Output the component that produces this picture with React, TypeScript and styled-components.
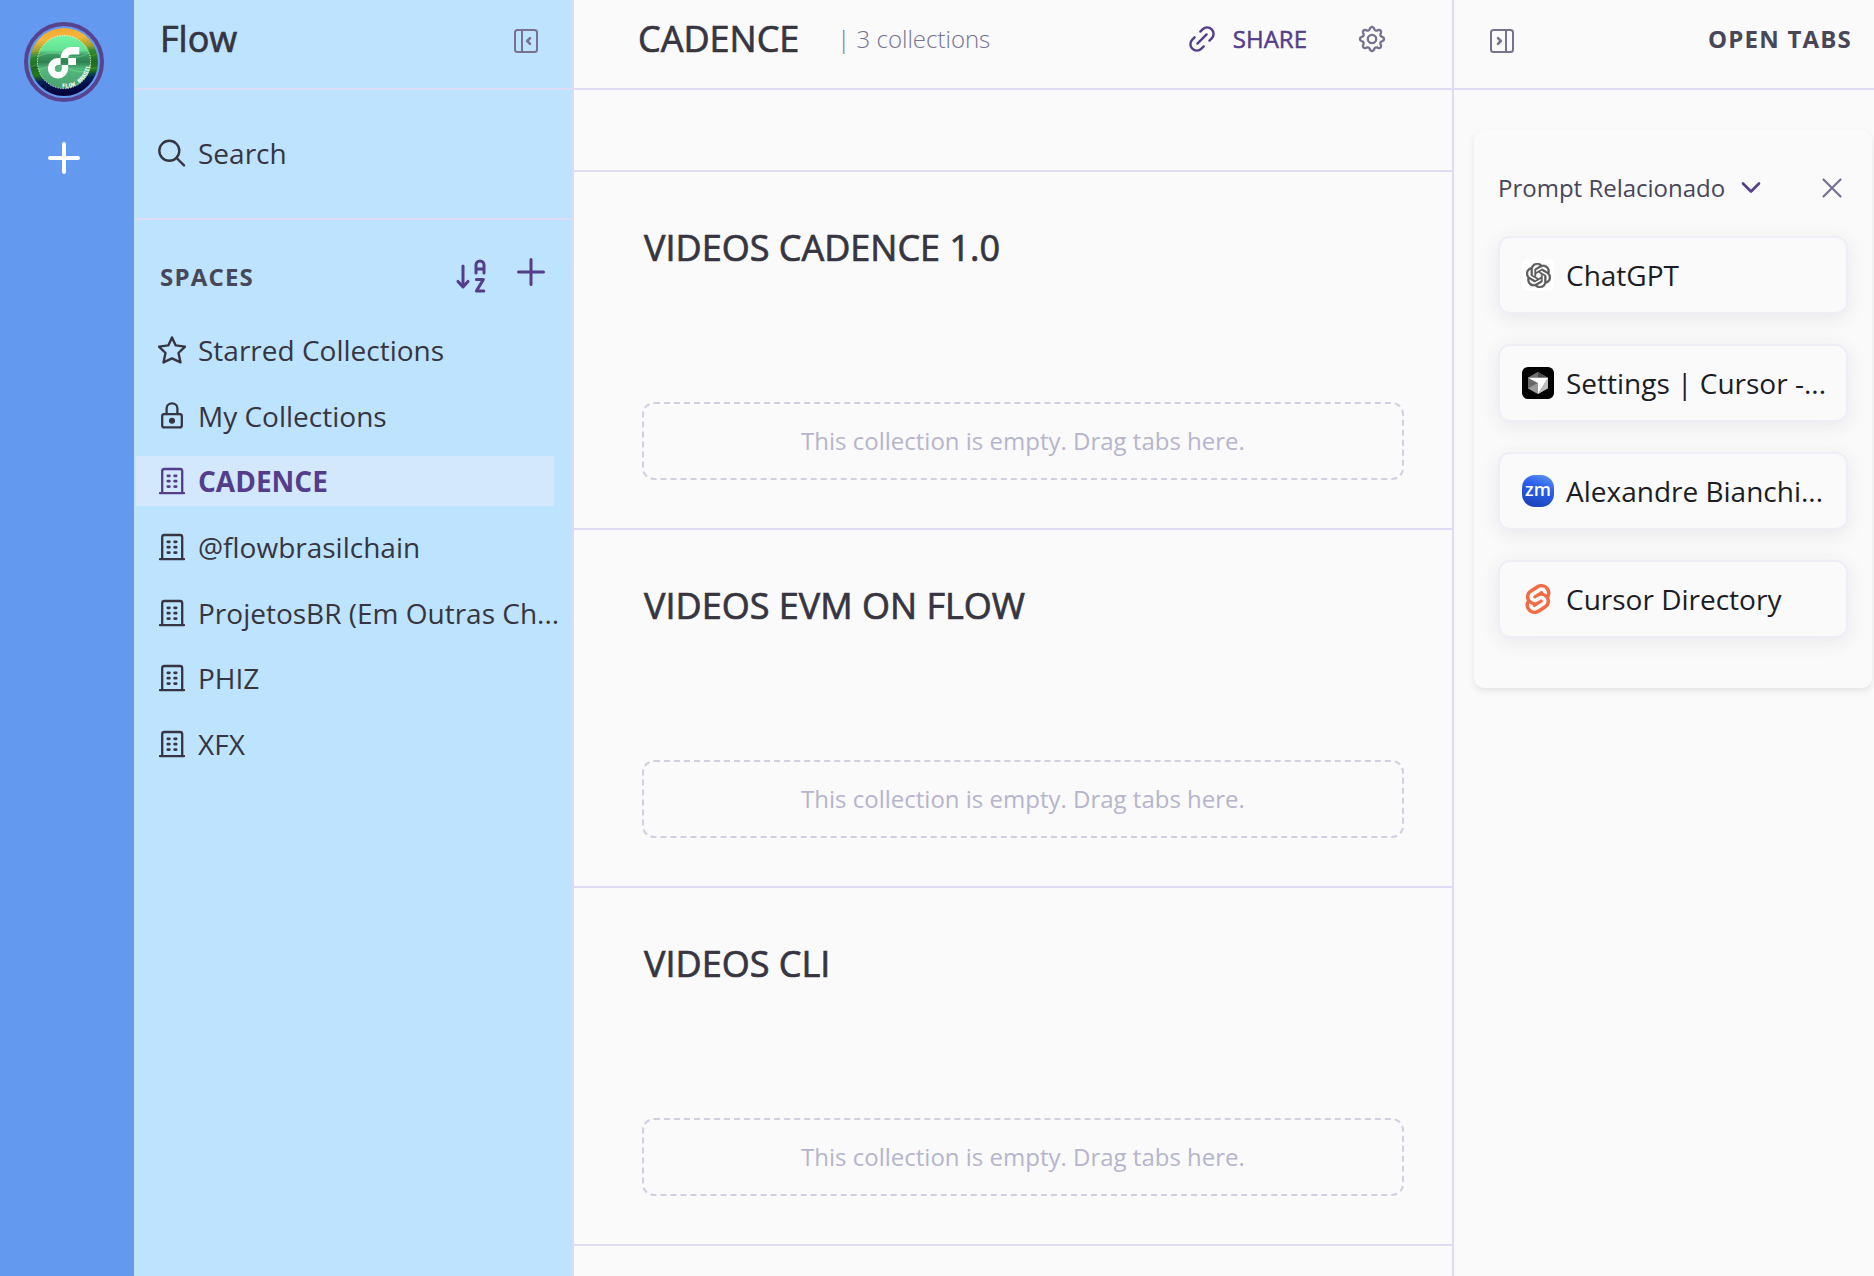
import React from "react";
import styled, { createGlobalStyle } from "styled-components";
import { SiOpenai, SiSvelte } from "react-icons/si";

const color = {
  rail: "#6499f0",
  sidebar: "#bde3fe",
  selected: "#d3e7fd",
  surface: "#fafafa",
  line: "#dddcf4",
  ink: "#363541",
  heading: "#484659",
  muted: "#757390",
  faint: "#b6b5cd",
  dash: "#d2d0e0",
  purple: "#543d8b",
  tabInk: "#1c1c24",
};

const GlobalStyle = createGlobalStyle`
  *, *::before, *::after { box-sizing: border-box; }
  html, body, #root { height: 100%; }
  body {
    margin: 0;
    font-family: "Open Sans", "Noto Sans", sans-serif;
    color: ${color.ink};
    background: ${color.surface};
  }
  h1, h2, h3, p, ul { margin: 0; padding: 0; font-weight: inherit; }
  ul { list-style: none; }
  button, input { font: inherit; color: inherit; border: 0; background: none; padding: 0; }
  button { cursor: pointer; }
  svg { display: block; flex: none; }
`;

const Shell = styled.div`
  display: grid;
  grid-template-columns: 134px 440px minmax(0, 1fr) 422px;
  height: 100vh;
  overflow: hidden;
`;

const Rail = styled.nav`
  display: flex;
  flex-direction: column;
  align-items: center;
  gap: 40px;
  padding: 22px 6px 0 0;
  background: ${color.rail};
`;

const IconButton = styled.button<{ $tone?: string }>`
  display: flex;
  align-items: center;
  justify-content: center;
  color: ${(p) => p.$tone ?? color.muted};
`;

const Sidebar = styled.aside`
  padding-left: 2px;
  background: ${color.sidebar};
  border-right: 2px solid ${color.line};
`;

const Bar = styled.header<{ $pad: string }>`
  display: flex;
  align-items: center;
  justify-content: space-between;
  height: 90px;
  padding: ${(p) => p.$pad};
  border-bottom: 2px solid ${color.line};
`;

const Title = styled.h1`
  font-size: 36px;
  line-height: 48px;
  font-weight: 500;
  -webkit-text-stroke: 0.02em currentColor;
`;

const SearchBox = styled.label`
  display: flex;
  align-items: center;
  gap: 12px;
  height: 130px;
  padding: 0 0 2px 22px;
  border-bottom: 2px solid ${color.line};
`;

const SearchInput = styled.input`
  flex: 1;
  min-width: 0;
  font-size: 28px;
  line-height: 40px;
  outline: none;
  &::placeholder { color: ${color.ink}; opacity: 1; }
`;

const SpacesHead = styled.div`
  display: flex;
  align-items: center;
  justify-content: space-between;
  padding: 33px 27px 24px 24px;
`;

const Caps = styled.h2`
  font-size: 24px;
  line-height: 48px;
  font-weight: 700;
  letter-spacing: 0.05em;
  color: ${color.heading};
`;

const Actions = styled.div<{ $gap: number; $align?: string }>`
  display: flex;
  align-items: ${(p) => p.$align ?? "center"};
  gap: ${(p) => p.$gap}px;
`;

const SpaceList = styled.ul`
  display: flex;
  flex-direction: column;
  justify-content: space-between;
  min-height: 444px;
  padding-right: 18px;
`;

const SpaceLink = styled.a<{ $active?: boolean }>`
  display: flex;
  align-items: center;
  gap: 12px;
  height: 50px;
  padding-left: 22px;
  white-space: nowrap;
  text-decoration: none;
  font-size: 28px;
  line-height: 40px;
  font-weight: ${(p) => (p.$active ? 700 : 400)};
  color: ${(p) => (p.$active ? color.purple : color.ink)};
  background: ${(p) => (p.$active ? color.selected : "transparent")};
`;

const Main = styled.main`
  overflow: hidden;
`;

const TitleGroup = styled.div`
  display: flex;
  align-items: center;
  gap: 38px;
`;

const Count = styled.p`
  font-size: 24px;
  line-height: 32px;
  font-weight: 300;
  color: ${color.muted};
`;

const ShareButton = styled.button`
  display: flex;
  align-items: center;
  gap: 18px;
  font-size: 24px;
  line-height: 32px;
  font-weight: 500;
  -webkit-text-stroke: 0.02em currentColor;
  color: ${color.purple};
`;

const Spacer = styled.div`
  height: 82px;
  border-bottom: 2px solid ${color.line};
`;

const Collection = styled.section`
  display: flex;
  flex-direction: column;
  justify-content: space-between;
  height: 358px;
  padding: 52px 48px 48px 68px;
  border-bottom: 2px solid ${color.line};
`;

const CollectionTitle = styled.h2`
  padding-left: 2px;
  font-size: 36px;
  line-height: 48px;
  font-weight: 500;
  -webkit-text-stroke: 0.02em currentColor;
`;

const DropZone = styled.p`
  display: flex;
  align-items: center;
  justify-content: center;
  height: 78px;
  border: 2px dashed ${color.dash};
  border-radius: 12px;
  font-size: 24px;
  line-height: 32px;
  color: ${color.faint};
`;

const TabsPanel = styled.aside`
  border-left: 2px solid ${color.line};
`;

const WindowCard = styled.section`
  margin: 40px 2px 0 20px;
  padding: 40px 24px 50px;
  border-radius: 10px;
  background: ${color.surface};
  box-shadow: 0 3px 6px rgba(40, 40, 60, 0.1);
`;

const WindowHead = styled.div`
  display: flex;
  align-items: center;
  justify-content: space-between;
  height: 36px;
  margin-bottom: 30px;
  padding-right: 6px;
`;

const WindowName = styled.button`
  display: flex;
  align-items: center;
  gap: 16px;
  font-size: 24px;
  line-height: 32px;
  color: ${color.heading};
`;

const TabList = styled.ul`
  display: flex;
  flex-direction: column;
  gap: 30px;
`;

const TabLink = styled.a`
  display: flex;
  align-items: center;
  gap: 12px;
  height: 78px;
  padding: 0 18px 0 22px;
  border: 2px solid #efeef7;
  border-radius: 12px;
  background: ${color.surface};
  box-shadow: 0 4px 20px rgba(50, 50, 90, 0.09);
  color: ${color.tabInk};
  font-size: 28px;
  line-height: 40px;
  white-space: nowrap;
  text-decoration: none;
`;

const Favicon = styled.span<{ $bg?: string }>`
  display: flex;
  align-items: center;
  justify-content: center;
  flex: none;
  width: 32px;
  height: 32px;
  border-radius: 6px;
  background: ${(p) => p.$bg ?? "transparent"};
`;

type StrokeProps = { w: number; h?: number; sw?: number; children: React.ReactNode };
const Stroke = ({ w, h = w, sw = 2, children }: StrokeProps) => (
  <svg width={w} height={h} viewBox={`0 0 ${w} ${h}`} fill="none" stroke="currentColor" strokeWidth={sw} strokeLinecap="round" strokeLinejoin="round" aria-hidden="true">
    {children}
  </svg>
);

const PlusIcon = ({ size, sw }: { size: number; sw: number }) => (
  <Stroke w={size} sw={sw}>
    <path d={`M${size / 2} ${sw / 2}V${size - sw / 2}M${sw / 2} ${size / 2}H${size - sw / 2}`} />
  </Stroke>
);

const PanelIcon = ({ side }: { side: "left" | "right" }) => (
  <Stroke w={24} h={28}>
    <g transform={side === "right" ? "translate(24 0) scale(-1 1)" : undefined}>
      <rect x="1" y="5" width="22" height="22" rx="2.5" />
      <path d="M8 5V27" />
      <path d="M16 13.2L13.2 16L16 18.8" strokeWidth="2.6" />
    </g>
  </Stroke>
);

const SearchIcon = () => (
  <Stroke w={28} sw={2.4}>
    <circle cx="11.3" cy="11.8" r="10" />
    <path d="M18.6 19L26 26.4" />
  </Stroke>
);

const StarIcon = () => (
  <Stroke w={28} sw={2.4}>
    <path d="M14 1.4L17.7 9.4L27 10.6L20.5 17L22.5 26.4L14 22.4L5.5 26.4L7.5 17L1 10.6L10.3 9.4Z" />
  </Stroke>
);

const LockIcon = () => (
  <Stroke w={28} sw={2.3}>
    <rect x="4.2" y="12.2" width="19.6" height="13.2" rx="2" />
    <path d="M8.6 12V6.6C8.6 3.6 11 1.4 14 1.4S19.4 3.6 19.4 6.6V12" />
    <circle cx="14" cy="18.8" r="1.9" fill="currentColor" />
  </Stroke>
);

const BuildingIcon = () => (
  <Stroke w={28} sw={2.3}>
    <path d="M2 26.2H26M4.2 26V4.2Q4.2 2 6.4 2H22Q24.2 2 24.2 4.2V26" />
    <path d="M9.8 8.8H11.4M16.6 8.8H18.2M9.8 14.2H11.4M16.6 14.2H18.2M9.8 19.6H11.4M16.6 19.6H18.2" strokeWidth="2.7" />
  </Stroke>
);

const SortIcon = () => (
  <Stroke w={32} h={38} sw={3}>
    <path d="M8 8V29M3 23.4L8 29L13 23.4" />
    <path d="M21 15V7A4 4 0 0 1 29 7V15M21 11H29M21.4 21.4H28.4L21.4 33H28.8" />
  </Stroke>
);

const LinkIcon = () => (
  <Stroke w={26} sw={2.4}>
    <path d="M8.4 17.6L17.6 8.4" />
    <path d="M11.3 5.6L13.6 3.3A6.4 6.4 0 0 1 22.7 3.3A6.4 6.4 0 0 1 22.7 12.4L20.4 14.7" />
    <path d="M14.7 20.4L12.4 22.7A6.4 6.4 0 0 1 3.3 22.7A6.4 6.4 0 0 1 3.3 13.6L5.6 11.3" />
  </Stroke>
);

// Eight rounded teeth traced as one closed wave around the hub.
const gearOutline =
  Array.from({ length: 96 }, (_, i) => {
    const a = (i / 96) * Math.PI * 2;
    const c = Math.cos(8 * a);
    const r = 10.6 + 1.4 * Math.sign(c) * Math.pow(Math.abs(c), 0.7);
    return `${i ? "L" : "M"}${(14 + r * Math.cos(a)).toFixed(2)} ${(14 + r * Math.sin(a)).toFixed(2)}`;
  }).join("") + "Z";

const GearIcon = () => (
  <Stroke w={28} sw={2.3}>
    <path d={gearOutline} />
    <circle cx="14" cy="14" r="4.2" />
  </Stroke>
);

const ChevronIcon = () => (
  <Stroke w={20} sw={2.6}>
    <path d="M2 5.5L10 13.5L18 5.5" stroke={color.purple} />
  </Stroke>
);

const CloseIcon = () => (
  <Stroke w={20} sw={2.2}>
    <path d="M1.5 1.5L18.5 18.5M18.5 1.5L1.5 18.5" />
  </Stroke>
);

const Avatar = () => (
  <svg width="80" height="80" viewBox="0 0 80 80" role="img" aria-label="Flow Brasil">
    <defs>
      <linearGradient id="sky" x1="0" y1="0" x2="0.1" y2="1">
        <stop offset="0" stopColor="#f7a535" />
        <stop offset="0.2" stopColor="#f3b63a" />
        <stop offset="0.34" stopColor="#9fa32e" />
        <stop offset="0.42" stopColor="#2f8a2c" />
        <stop offset="0.58" stopColor="#1f6a1e" />
        <stop offset="0.7" stopColor="#1f7a1c" />
        <stop offset="0.8" stopColor="#06205a" />
        <stop offset="1" stopColor="#03023a" />
      </linearGradient>
      <linearGradient id="coin" x1="0" y1="0" x2="0" y2="1">
        <stop offset="0" stopColor="#76f5a4" />
        <stop offset="0.28" stopColor="#63e294" />
        <stop offset="0.36" stopColor="#3d9c63" />
        <stop offset="0.5" stopColor="#2f7f50" />
        <stop offset="0.62" stopColor="#52b87c" />
        <stop offset="1" stopColor="#4a9f70" />
      </linearGradient>
      <path id="motto" d="M34 64.8A25.5 25.5 0 0 0 65.5 34" />
    </defs>
    <circle cx="40" cy="40" r="38" fill="none" stroke="#57438f" strokeWidth="4" />
    <circle cx="40" cy="40" r="34" fill="url(#sky)" />
    <path d="M7 35Q22 28 36 34T73 32M7 45Q24 36 40 42T73 46" fill="none" stroke="#4da53a" strokeOpacity="0.5" strokeWidth="1.4" />
    <circle cx="40" cy="40" r="26.6" fill="url(#coin)" />
    <path d="M15 34Q28 28 40 33T65 31M15 48Q30 41 42 46T65 49" fill="none" stroke="#79d79c" strokeOpacity="0.45" strokeWidth="1.4" />
    <circle cx="40" cy="40" r="26.6" fill="none" stroke="#e8fff0" strokeWidth="0.9" strokeDasharray="1.4 1.2" />
    <path fill="#fff" fillRule="evenodd" d="M36.6 36A10.2 11 0 0 1 47 25H55.3V32.6H47.5Q44.2 32.6 44.2 36H52V43H44.2V46.2A10.2 10.2 0 1 1 34 36ZM36.6 36V43H44.2V36ZM34.3 43A3.5 3.5 0 1 0 37.8 46.5V43Z" />
    <text fill="#fff" fontSize="6" fontWeight="700" fontFamily="Liberation Mono, monospace">
      <textPath href="#motto" startOffset="4">FLOW BRASIL</textPath>
    </text>
  </svg>
);

const CursorCube = () => (
  <svg width="32" height="32" viewBox="0 0 32 32" aria-hidden="true">
    <path d="M16 5L26 10.7V21.3L16 27L6 21.3V10.7Z" fill="#8b8b8b" />
    <path d="M16 5L26 10.7H6Z" fill="#4a4a4a" />
    <path d="M16 5V10.7H6Z" fill="#707070" />
    <path d="M6 10.7L16 16V27L6 21.3Z" fill="#9a9a9a" />
    <path d="M6 10.7L16 16L6 21.3Z" fill="#6a6a6a" />
    <path d="M6 10.7H26L16 27V16Z" fill="#fff" />
    <path d="M26 10.7V21.3L16 27Z" fill="#bdbdbd" />
  </svg>
);

const ZoomMark = () => (
  <svg width="32" height="32" viewBox="0 0 32 32" aria-hidden="true">
    <defs>
      <linearGradient id="zoom" x1="0.8" y1="0" x2="0.4" y2="1">
        <stop offset="0" stopColor="#5a93ee" />
        <stop offset="0.4" stopColor="#2a5ff0" />
        <stop offset="1" stopColor="#1c45b8" />
      </linearGradient>
    </defs>
    <rect width="32" height="32" rx="13" fill="url(#zoom)" />
    <text x="16" y="21" textAnchor="middle" fill="#fff" fontSize="18" fontWeight="600" fontFamily="Open Sans, sans-serif">zm</text>
  </svg>
);

const spaces = [
  { name: "Starred Collections", icon: <StarIcon /> },
  { name: "My Collections", icon: <LockIcon /> },
  { name: "CADENCE", icon: <BuildingIcon />, active: true },
  { name: "@flowbrasilchain", icon: <BuildingIcon /> },
  { name: "ProjetosBR (Em Outras Ch...", icon: <BuildingIcon /> },
  { name: "PHIZ", icon: <BuildingIcon /> },
  { name: "XFX", icon: <BuildingIcon /> },
];

const collections = ["VIDEOS CADENCE 1.0", "VIDEOS EVM ON FLOW", "VIDEOS CLI"];

const tabs = [
  { title: "ChatGPT", bg: "#ffffff", icon: <SiOpenai size={25} color="#5a5a5a" stroke="#5a5a5a" strokeWidth={0.6} /> },
  { title: "Settings | Cursor -...", bg: "#000000", icon: <CursorCube /> },
  { title: "Alexandre Bianchi...", icon: <ZoomMark /> },
  { title: "Cursor Directory", icon: <SiSvelte size={30} color="#f26b43" /> },
];

export default function App() {
  return (
    <>
      <GlobalStyle />
      <Shell>
        <Rail aria-label="Organizations">
          <IconButton aria-label="Flow"><Avatar /></IconButton>
          <IconButton $tone="#ffffff" aria-label="Add organization"><PlusIcon size={32} sw={4} /></IconButton>
        </Rail>

        <Sidebar>
          <Bar $pad="0 34px 10px 24px">
            <Title>Flow</Title>
            <IconButton aria-label="Collapse sidebar"><PanelIcon side="left" /></IconButton>
          </Bar>
          <SearchBox>
            <SearchIcon />
            <SearchInput type="text" placeholder="Search" aria-label="Search" />
          </SearchBox>
          <SpacesHead>
            <Caps>SPACES</Caps>
            <Actions $gap={30} $align="flex-start">
              <IconButton $tone={color.purple} aria-label="Sort spaces"><SortIcon /></IconButton>
              <IconButton $tone={color.purple} aria-label="Add space"><PlusIcon size={28} sw={3} /></IconButton>
            </Actions>
          </SpacesHead>
          <SpaceList>
            {spaces.map((s) => (
              <li key={s.name}>
                <SpaceLink href="#" $active={s.active}>{s.icon}{s.name}</SpaceLink>
              </li>
            ))}
          </SpaceList>
        </Sidebar>

        <Main>
          <Bar $pad="0 66px 10px 64px">
            <TitleGroup>
              <Title>CADENCE</Title>
              <Count>| 3 collections</Count>
            </TitleGroup>
            <Actions $gap={51}>
              <ShareButton><LinkIcon />SHARE</ShareButton>
              <IconButton aria-label="Settings"><GearIcon /></IconButton>
            </Actions>
          </Bar>
          <Spacer />
          {collections.map((name) => (
            <Collection key={name}>
              <CollectionTitle>{name}</CollectionTitle>
              <DropZone>This collection is empty. Drag tabs here.</DropZone>
            </Collection>
          ))}
        </Main>

        <TabsPanel>
          <Bar $pad="0 22px 10px 36px">
            <IconButton aria-label="Collapse open tabs"><PanelIcon side="right" /></IconButton>
            <Caps>OPEN TABS</Caps>
          </Bar>
          <WindowCard>
            <WindowHead>
              <WindowName>Prompt Relacionado<ChevronIcon /></WindowName>
              <IconButton aria-label="Close window"><CloseIcon /></IconButton>
            </WindowHead>
            <TabList>
              {tabs.map((t) => (
                <li key={t.title}>
                  <TabLink href="#"><Favicon $bg={t.bg}>{t.icon}</Favicon>{t.title}</TabLink>
                </li>
              ))}
            </TabList>
          </WindowCard>
        </TabsPanel>
      </Shell>
    </>
  );
}
